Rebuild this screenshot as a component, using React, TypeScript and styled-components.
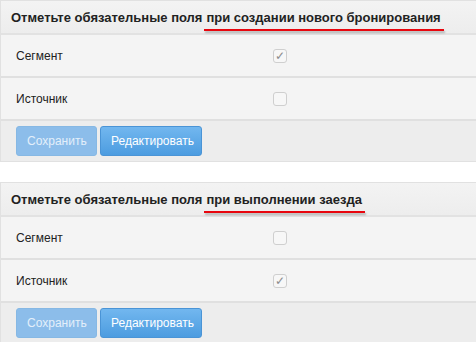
import * as React from "react";
import { FC } from "react";
import styled, { createGlobalStyle } from "styled-components";

const GlobalStyle = createGlobalStyle`
  html, body {
    margin: 0;
    padding: 0;
    background: #ffffff;
    font-family: "Liberation Sans", Arial, sans-serif;
  }
`;

type Field = {
  label: string;
  checked: boolean;
};

type Section = {
  title: string;
  highlight: string;
  fields: Field[];
};

const sections: Section[] = [
  {
    title: "Отметьте обязательные поля",
    highlight: "при создании нового бронирования",
    fields: [
      { label: "Сегмент", checked: true },
      { label: "Источник", checked: false },
    ],
  },
  {
    title: "Отметьте обязательные поля",
    highlight: "при выполнении заезда",
    fields: [
      { label: "Сегмент", checked: false },
      { label: "Источник", checked: true },
    ],
  },
];

const Page = styled.div`
  display: flex;
  flex-direction: column;
  gap: 20px;
`;

const Panel = styled.section`
  border: 1px solid #e1e1e1;
  border-right: none;
  background: #f4f4f4;
`;

const Header = styled.div`
  height: 32px;
  display: flex;
  align-items: center;
  padding: 0 10px;
  background: linear-gradient(#f3f3f3, #ededed);
  border-bottom: 2px solid #e2e2e2;
  font-size: 13px;
  font-weight: bold;
  color: #222;
  white-space: nowrap;
`;

const Marked = styled.span`
  position: relative;
  margin-left: 4px;

  &::after {
    content: "";
    position: absolute;
    left: -2px;
    right: -3px;
    bottom: -6px;
    height: 2px;
    background: #e8060e;
    box-shadow: 1px 2px 2px rgba(0, 0, 0, 0.25);
  }
`;

const Row = styled.div`
  height: 41px;
  display: grid;
  grid-template-columns: 257px 14px;
  align-items: center;
  padding-left: 15px;
  border-bottom: 2px solid #e0e0e0;
  font-size: 12px;
  color: #222;
`;

const Check = styled.span`
  width: 14px;
  height: 14px;
  box-sizing: border-box;
  border: 1px solid #cfcfcf;
  border-radius: 3px;
  background: #f7f7f7;
  display: flex;
  align-items: center;
  justify-content: center;
  color: #8c8c8c;
  font-size: 12px;
  line-height: 1;
`;

const Footer = styled.div`
  height: 40px;
  display: flex;
  align-items: center;
  gap: 3px;
  padding: 0 15px;
  background: #ededed;
`;

const Button = styled.button<{ $disabled?: boolean; $width: number }>`
  width: ${(p) => p.$width}px;
  height: 30px;
  padding: 0 10px;
  border-radius: 3px;
  font-family: "Liberation Sans", Arial, sans-serif;
  font-size: 12px;
  cursor: pointer;
  border: 1px solid ${(p) => (p.$disabled ? "#86b8e4" : "#4a94d6")};
  background: ${(p) =>
    p.$disabled ? "#8cbdea" : "linear-gradient(#72b7ef, #4c9ce0)"};
  color: ${(p) => (p.$disabled ? "#e3effa" : "#ffffff")};
`;

const App: FC = () => (
  <>
    <GlobalStyle />
    <Page>
      {sections.map((section) => (
        <Panel key={section.highlight}>
          <Header>
            {section.title}
            <Marked>{section.highlight}</Marked>
          </Header>
          {section.fields.map((field) => (
            <Row key={field.label}>
              <span>{field.label}</span>
              <Check>{field.checked ? "✓" : ""}</Check>
            </Row>
          ))}
          <Footer>
            <Button $disabled $width={81}>
              Сохранить
            </Button>
            <Button $width={102}>Редактировать</Button>
          </Footer>
        </Panel>
      ))}
    </Page>
  </>
);

export default App;
